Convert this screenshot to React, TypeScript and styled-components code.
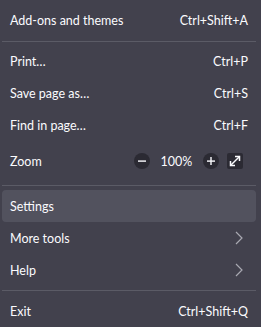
import React from 'react';
import styled, { createGlobalStyle } from 'styled-components';

const GlobalStyle = createGlobalStyle`
  html, body {
    margin: 0;
    padding: 0;
    background: #42414d;
  }
  body {
    font-family: Lato, 'Open Sans', sans-serif;
  }
`;

const Panel = styled.div`
  width: 261px;
  height: 327px;
  box-sizing: border-box;
  padding: 5px 0 0;
  background: #42414d;
  color: #fbfbfe;
  font-size: 12.5px;
  display: flex;
  flex-direction: column;
  overflow: hidden;
`;

const Row = styled.div<{ $active?: boolean; $tall?: boolean }>`
  height: ${(p) => (p.$tall ? 40 : 32)}px;
  margin: 0 5px 0 2px;
  padding: 0 8px;
  border-radius: 4px;
  display: flex;
  align-items: center;
  justify-content: space-between;
  background: ${(p) => (p.$active ? '#52525e' : 'transparent')};
`;

const Label = styled.span`
  white-space: nowrap;
`;

const Shortcut = styled.span`
  white-space: nowrap;
`;

const Separator = styled.div`
  height: 1px;
  margin: 4px 5px 4px 2px;
  background: #5b5b66;
`;

const ZoomControls = styled.div`
  display: flex;
  align-items: center;
  margin-right: 5px;
`;

const RoundButton = styled.span`
  width: 16px;
  height: 16px;
  border-radius: 50%;
  background: #2b2a33;
  display: flex;
  align-items: center;
  justify-content: center;
`;

const ZoomValue = styled.span`
  width: 53px;
  text-align: center;
`;

const SquareButton = styled.span`
  width: 16px;
  height: 16px;
  margin-left: 8px;
  border-radius: 2px;
  background: #2b2a33;
  display: flex;
  align-items: center;
  justify-content: center;
`;

const ChevronBox = styled.span`
  display: flex;
  margin-right: 5px;
`;

const Chevron = () => (
  <ChevronBox>
    <svg width="8" height="14" viewBox="0 0 8 14" fill="none">
      <path d="M1 1 L7 7 L1 13" stroke="#a9a9b2" strokeWidth="1.2" />
    </svg>
  </ChevronBox>
);

const Minus = () => (
  <svg width="10" height="10" viewBox="0 0 10 10">
    <rect x="1" y="4.4" width="8" height="1.4" fill="#fbfbfe" />
  </svg>
);

const Plus = () => (
  <svg width="10" height="10" viewBox="0 0 10 10">
    <rect x="1" y="4.4" width="8" height="1.4" fill="#fbfbfe" />
    <rect x="4.3" y="1" width="1.4" height="8" fill="#fbfbfe" />
  </svg>
);

const Expand = () => (
  <svg width="12" height="12" viewBox="0 0 12 12" fill="none">
    <path d="M2 10 L10 2" stroke="#fbfbfe" strokeWidth="1.5" />
    <path d="M6 1.5 H10.5 V6" stroke="#fbfbfe" strokeWidth="1.5" />
    <path d="M1.5 6 V10.5 H6" stroke="#fbfbfe" strokeWidth="1.5" />
  </svg>
);

export default function App() {
  return (
    <>
      <GlobalStyle />
      <Panel>
        <Row>
          <Label>Add-ons and themes</Label>
          <Shortcut>Ctrl+Shift+A</Shortcut>
        </Row>
        <Separator />
        <Row>
          <Label>Print…</Label>
          <Shortcut>Ctrl+P</Shortcut>
        </Row>
        <Row>
          <Label>Save page as…</Label>
          <Shortcut>Ctrl+S</Shortcut>
        </Row>
        <Row>
          <Label>Find in page…</Label>
          <Shortcut>Ctrl+F</Shortcut>
        </Row>
        <Row $tall>
          <Label>Zoom</Label>
          <ZoomControls>
            <RoundButton>
              <Minus />
            </RoundButton>
            <ZoomValue>100%</ZoomValue>
            <RoundButton>
              <Plus />
            </RoundButton>
            <SquareButton>
              <Expand />
            </SquareButton>
          </ZoomControls>
        </Row>
        <Separator />
        <Row $active>
          <Label>Settings</Label>
        </Row>
        <Row>
          <Label>More tools</Label>
          <Chevron />
        </Row>
        <Row>
          <Label>Help</Label>
          <Chevron />
        </Row>
        <Separator />
        <Row>
          <Label>Exit</Label>
          <Shortcut>Ctrl+Shift+Q</Shortcut>
        </Row>
      </Panel>
    </>
  );
}
